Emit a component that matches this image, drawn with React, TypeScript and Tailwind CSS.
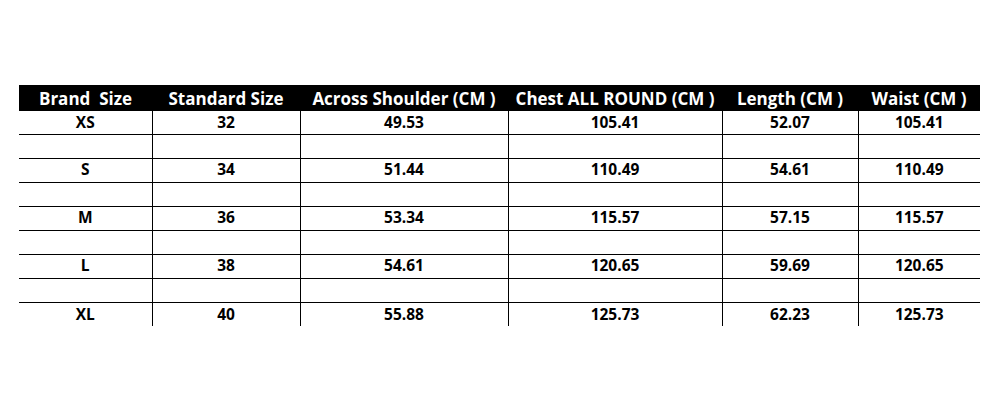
const headers = [
  'Brand  Size',
  'Standard Size',
  'Across Shoulder (CM )',
  'Chest ALL ROUND (CM )',
  'Length (CM )',
  'Waist (CM )',
];

const widths = ['w-[133px]', 'w-[148px]', 'w-[208px]', 'w-[214px]', 'w-[136px]', 'w-[122px]'];

const rows = [
  ['XS', '32', '49.53', '105.41', '52.07', '105.41'],
  ['S', '34', '51.44', '110.49', '54.61', '110.49'],
  ['M', '36', '53.34', '115.57', '57.15', '115.57'],
  ['L', '38', '54.61', '120.65', '59.69', '120.65'],
  ['XL', '40', '55.88', '125.73', '62.23', '125.73'],
];

export default function App() {
  const body: (string[] | null)[] = [];
  rows.forEach((r, i) => {
    body.push(r);
    if (i < rows.length - 1) body.push(null);
  });

  return (
    <div className="w-[1000px] h-[400px] bg-white pt-[85px] pl-[19px]" style={{ fontFamily: '"Open Sans", "Liberation Sans", sans-serif' }}>
      <table className="border-collapse table-fixed w-[961px]">
        <thead>
          <tr className="bg-black h-[26px]">
            {headers.map((h, i) => (
              <th key={i} className={`${widths[i]} p-0 pt-[1px] text-white text-[17px] font-bold whitespace-pre text-center leading-none`}>
                {h}
              </th>
            ))}
          </tr>
        </thead>
        <tbody>
          {body.map((r, ri) => (
            <tr key={ri} className={`${ri === 0 ? 'h-[23px]' : 'h-[24px]'} ${ri < body.length - 1 ? 'border-b border-black' : ''}`}>
              {Array.from({ length: 6 }).map((_, ci) => (
                <td key={ci} className={`p-0 text-center text-[15.5px] font-bold text-black leading-none ${ci > 0 ? 'border-l border-black' : ''}`}>
                  {r ? r[ci] : ''}
                </td>
              ))}
            </tr>
          ))}
        </tbody>
      </table>
    </div>
  );
}
